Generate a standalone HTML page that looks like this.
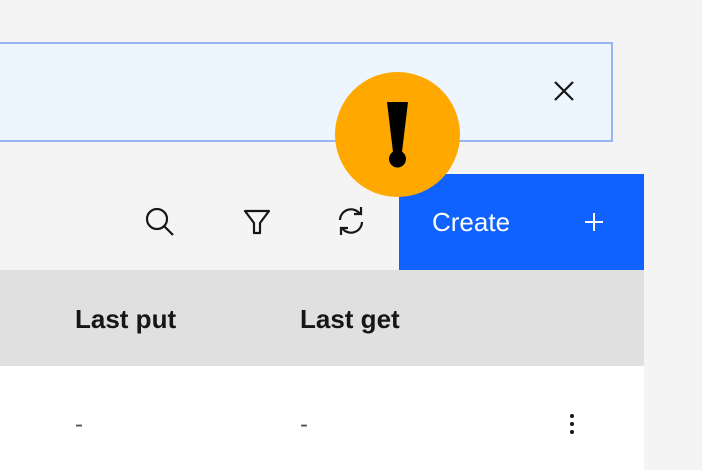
<html><head><style>
body{margin:0;width:702px;height:470px;overflow:hidden;background:#f4f4f4;position:relative;font-family:"Liberation Sans",sans-serif}
.n{position:absolute;left:-10px;top:42px;width:619px;height:96px;background:#edf5ff;border:2px solid #97b5f0}
.btn{position:absolute;left:399px;top:174px;width:245px;height:96px;background:#0f62fe;color:#fff;font-size:26px}
.hd{position:absolute;left:0;top:270px;width:644px;height:96px;background:#e0e0e0;font-weight:bold;font-size:26px;color:#161616}
.rw{position:absolute;left:0;top:366px;width:644px;height:104px;background:#fff;font-size:24px;color:#525252}
.c{position:absolute;left:335px;top:72px;width:125px;height:125px;border-radius:50%;background:#fea800}
</style></head><body>
<div class="n"></div>
<svg style="position:absolute;left:552px;top:79px" width="24" height="24"><path d="M3 3L21 21M21 3L3 21" stroke="#161616" stroke-width="2.2"/></svg>
<svg style="position:absolute;left:140px;top:202px" width="40" height="40" viewBox="0 0 40 40"><circle cx="17" cy="17" r="10" fill="none" stroke="#161616" stroke-width="2.2"/><path d="M24.5 24.5L33 33" stroke="#161616" stroke-width="2.2"/></svg>
<svg style="position:absolute;left:240px;top:204px" width="34" height="34" viewBox="0 0 34 34"><path d="M5 7H29L20 19V29H14V19Z" fill="none" stroke="#161616" stroke-width="2.2" stroke-linejoin="round"/></svg>
<svg style="position:absolute;left:334px;top:204px" width="34" height="34" viewBox="0 0 34 34"><path d="M26 10A11 11 0 0 0 6 16M8 24A11 11 0 0 0 28 18" fill="none" stroke="#161616" stroke-width="2.2"/><path d="M20 10H27V3M14 24H7V31" fill="none" stroke="#161616" stroke-width="2.2"/></svg>
<div class="btn"><span style="position:absolute;left:33px;top:33px">Create</span><svg style="position:absolute;left:185px;top:38px" width="20" height="20"><path d="M10 1V19M1 10H19" stroke="#fff" stroke-width="2"/></svg></div>
<div class="hd"><span style="position:absolute;left:75px;top:34px">Last put</span><span style="position:absolute;left:300px;top:34px">Last get</span></div>
<div class="rw"><span style="position:absolute;left:75px;top:45px">-</span><span style="position:absolute;left:300px;top:45px">-</span>
<svg style="position:absolute;left:566px;top:47px" width="12" height="24"><circle cx="6" cy="3" r="2" fill="#161616"/><circle cx="6" cy="11" r="2" fill="#161616"/><circle cx="6" cy="19" r="2" fill="#161616"/></svg></div>
<div class="c"><svg width="125" height="125"><path d="M52 30H73L67 80H58Z" fill="#000"/><circle cx="62.5" cy="87" r="8.5" fill="#000"/></svg></div>
</body></html>
